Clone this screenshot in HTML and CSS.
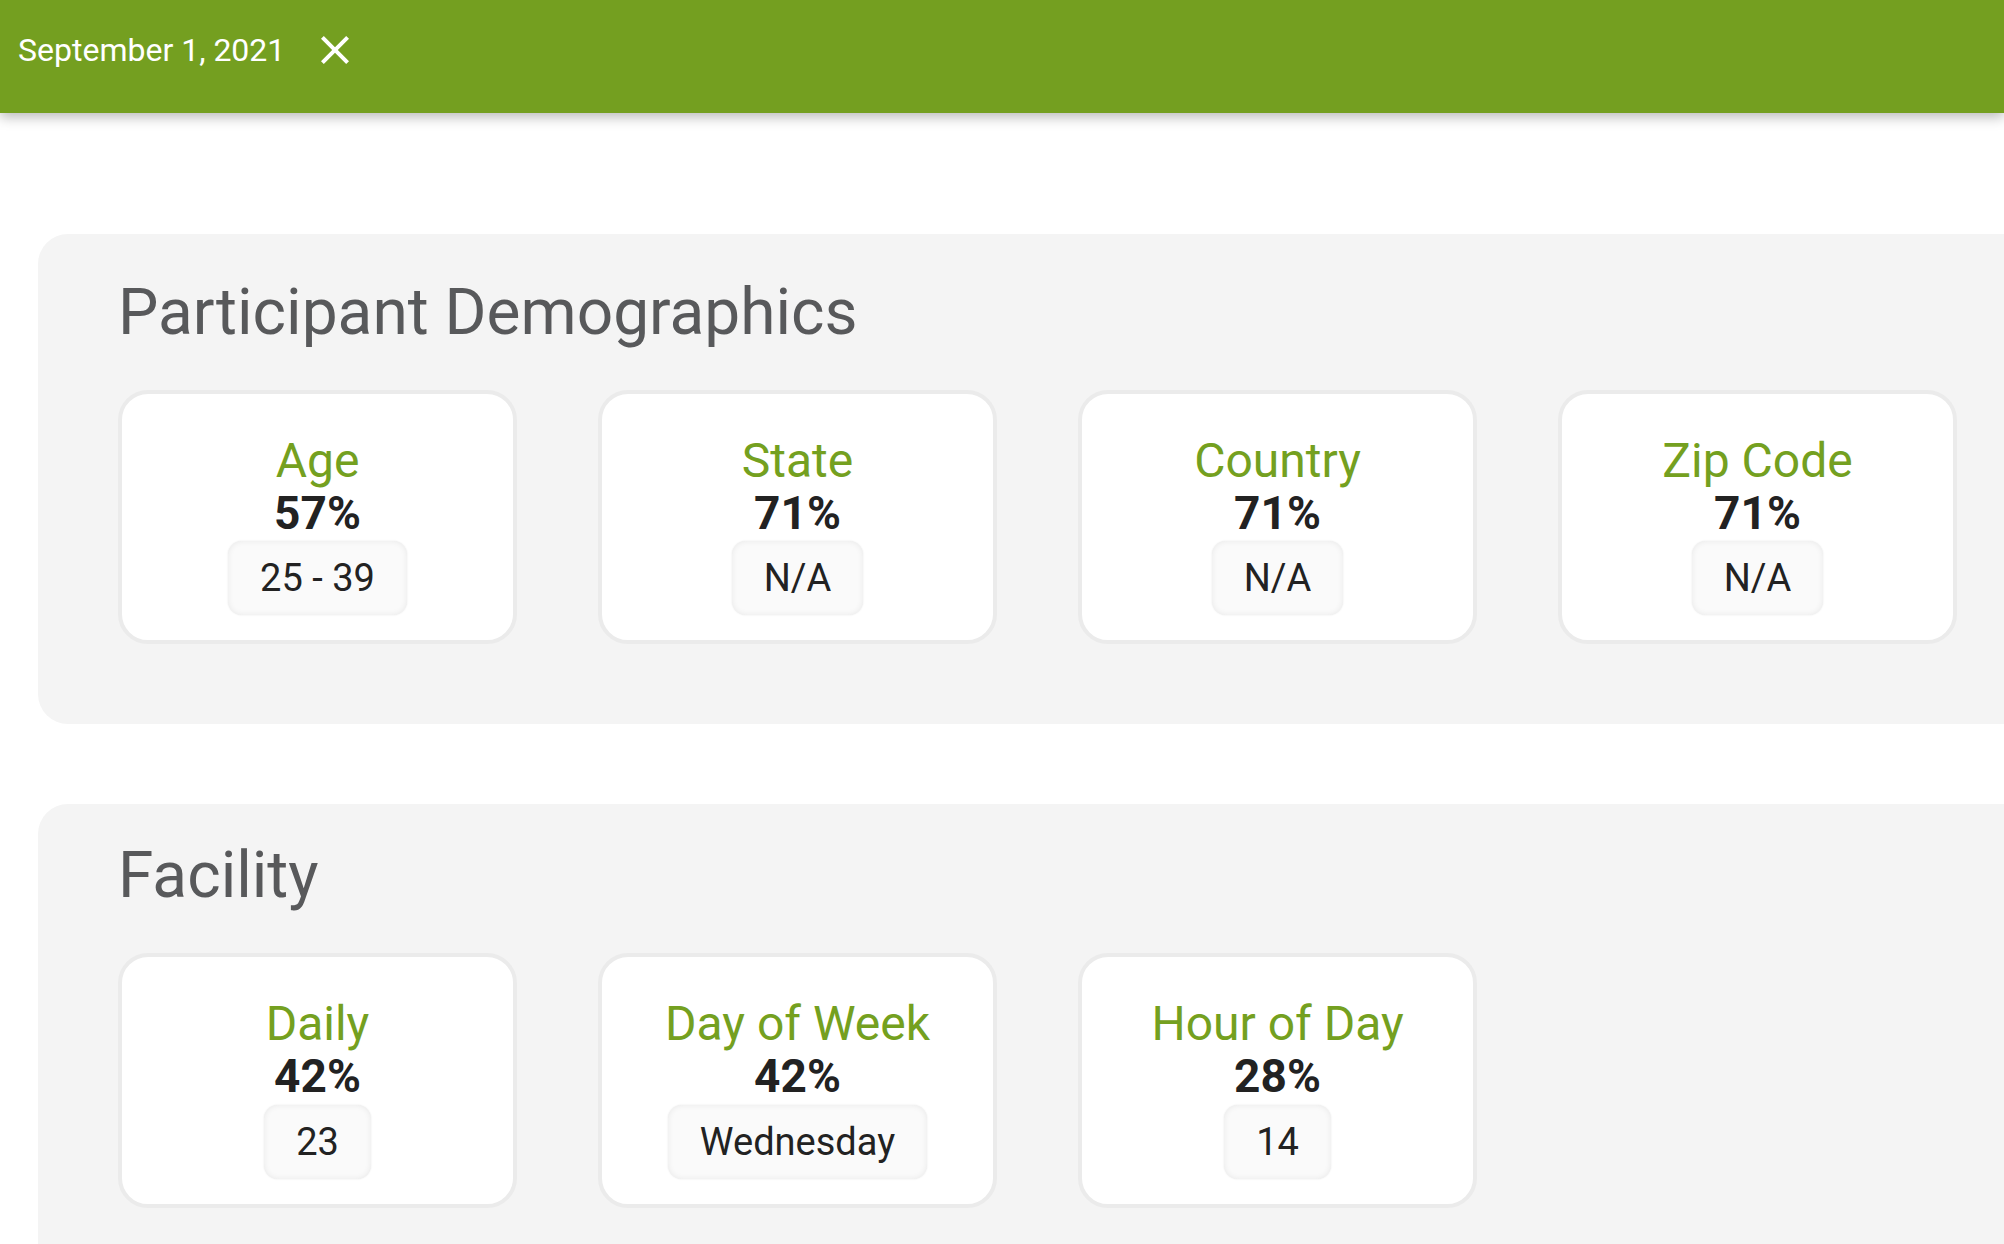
FILE: index.html
```html
<!DOCTYPE html>
<html lang="en">
<head>
  <meta charset="UTF-8">
  <meta name="viewport" content="width=device-width, initial-scale=1.0">
  <title>Participant Stats</title>
  <link rel="stylesheet" href="styles.css">
</head>
<body>
  <header class="topbar">
    <span class="topbar-date">September 1, 2021</span>
    <button class="close-btn" aria-label="Close">
      <svg viewBox="0 0 24 24" width="48" height="48">
        <path d="M19 6.41L17.59 5 12 10.59 6.41 5 5 6.41 10.59 12 5 17.59 6.41 19 12 13.41 17.59 19 19 17.59 13.41 12z"/>
      </svg>
    </button>
  </header>

  <main class="content">
    <section class="panel">
      <h2 class="panel-title">Participant Demographics</h2>
      <div class="stat-grid">
        <div class="stat-card">
          <div class="stat-label">Age</div>
          <div class="stat-value">57%</div>
          <div class="stat-pill">25 - 39</div>
        </div>
        <div class="stat-card">
          <div class="stat-label">State</div>
          <div class="stat-value">71%</div>
          <div class="stat-pill">N/A</div>
        </div>
        <div class="stat-card">
          <div class="stat-label">Country</div>
          <div class="stat-value">71%</div>
          <div class="stat-pill">N/A</div>
        </div>
        <div class="stat-card">
          <div class="stat-label">Zip Code</div>
          <div class="stat-value">71%</div>
          <div class="stat-pill">N/A</div>
        </div>
      </div>
    </section>

    <section class="panel">
      <h2 class="panel-title">Facility</h2>
      <div class="stat-grid">
        <div class="stat-card">
          <div class="stat-label">Daily</div>
          <div class="stat-value">42%</div>
          <div class="stat-pill">23</div>
        </div>
        <div class="stat-card">
          <div class="stat-label">Day of Week</div>
          <div class="stat-value">42%</div>
          <div class="stat-pill">Wednesday</div>
        </div>
        <div class="stat-card">
          <div class="stat-label">Hour of Day</div>
          <div class="stat-value">28%</div>
          <div class="stat-pill">14</div>
        </div>
      </div>
    </section>
  </main>
</body>
</html>
```

FILE: styles.css
```css
html,
body {
  margin: 0;
  overflow: hidden;
}

body {
  font-family: Roboto, "Noto Sans", sans-serif;
  background-color: #fff;
}

/* top bar */
.topbar {
  position: relative;
  z-index: 1;
  display: flex;
  align-items: center;
  height: 100px;
  padding: 0 0 13px 18px;
  background-color: #749f20;
  color: #fff;
  box-shadow: 0 4px 12px rgba(0, 0, 0, 0.28);
}

.topbar-date {
  font-size: 32px;
}

.close-btn {
  display: flex;
  width: 48px;
  height: 48px;
  margin-left: 26px;
  padding: 0;
  border: none;
  background: none;
  cursor: pointer;
}

.close-btn svg {
  fill: #fff;
}

/* sections */
.content {
  padding-top: 121px;
}

.panel {
  margin: 0 -60px 80px 38px;
  padding: 34px 80px 80px;
  background-color: #f4f4f4;
  border-radius: 30px;
}

.panel:first-child {
  padding-top: 41px;
}

.panel-title {
  margin: 0 0 40px;
  font-size: 64px;
  font-weight: 400;
  line-height: normal;
  color: #58595b;
}

.stat-grid {
  display: grid;
  grid-template-columns: repeat(4, 399px);
  column-gap: 81px;
}

.stat-card {
  display: flex;
  flex-direction: column;
  align-items: center;
  padding: 41px 0 25px;
  background-color: #fff;
  border: 4px solid #ebebeb;
  border-radius: 30px;
}

.stat-label {
  font-size: 48px;
  line-height: 1.1;
  color: #74a020;
}

.stat-value {
  margin-bottom: 3px;
  font-size: 46px;
  font-weight: 700;
  line-height: 1.1;
  color: #222;
}

.stat-pill {
  padding: 15px 32px;
  font-size: 38px;
  line-height: normal;
  color: #222;
  background-color: #fafafa;
  border-radius: 14px;
  box-shadow: inset 0 0 6px rgba(0, 0, 0, 0.07), 0 0 2px rgba(0, 0, 0, 0.1);
}
```
